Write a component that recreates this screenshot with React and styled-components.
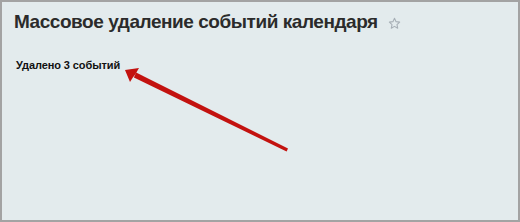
import React from 'react';
import styled, { createGlobalStyle } from 'styled-components';

const GlobalStyle = createGlobalStyle`
  html, body {
    margin: 0;
    padding: 0;
    background: #ffffff;
  }
`;

const Frame = styled.div`
  box-sizing: border-box;
  position: relative;
  width: 520px;
  height: 222px;
  border: 2px solid #a3a3a3;
  background: #e3ebed;
  font-family: "Liberation Sans", Arial, sans-serif;
  color: #222;
  padding: 9px 0 0 12px;
`;

const TitleRow = styled.div`
  display: flex;
  align-items: center;
  gap: 10px;
`;

const Title = styled.h1`
  margin: 0;
  font-size: 19px;
  font-weight: bold;
  letter-spacing: -0.45px;
  line-height: 22px;
  color: #2b2b2b;
`;

const Star = styled.svg`
  width: 13px;
  height: 13px;
  margin-top: 3px;
`;

const Message = styled.div`
  margin: 26px 0 0 2px;
  font-size: 11px;
  font-weight: bold;
  letter-spacing: -0.1px;
  line-height: 13px;
  color: #111;
`;

const Arrow = styled.svg`
  position: absolute;
  left: 0;
  top: 0;
  pointer-events: none;
`;

export default function App() {
  return (
    <>
      <GlobalStyle />
      <Frame>
        <TitleRow>
          <Title>Массовое удаление событий календаря</Title>
          <Star viewBox="0 0 24 24">
            <path
              d="M12 2.5l2.9 6.1 6.6.8-4.9 4.6 1.3 6.6L12 17.3l-5.9 3.3 1.3-6.6-4.9-4.6 6.6-.8z"
              fill="none"
              stroke="#a7afb6"
              strokeWidth="2"
              strokeLinejoin="round"
            />
          </Star>
        </TitleRow>
        <Message>Удалено 3 событий</Message>
        <Arrow width="520" height="222" viewBox="0 0 520 222">
          <polygon points="134.1,70.6 286,146.6 284.6,149.6 131.9,75.4" fill="#c3120f" strokeLinejoin="round" />
          <polygon points="123,68 137,66 133.5,72 130.5,76 128,80" fill="#c3120f" />
        </Arrow>
      </Frame>
    </>
  );
}
